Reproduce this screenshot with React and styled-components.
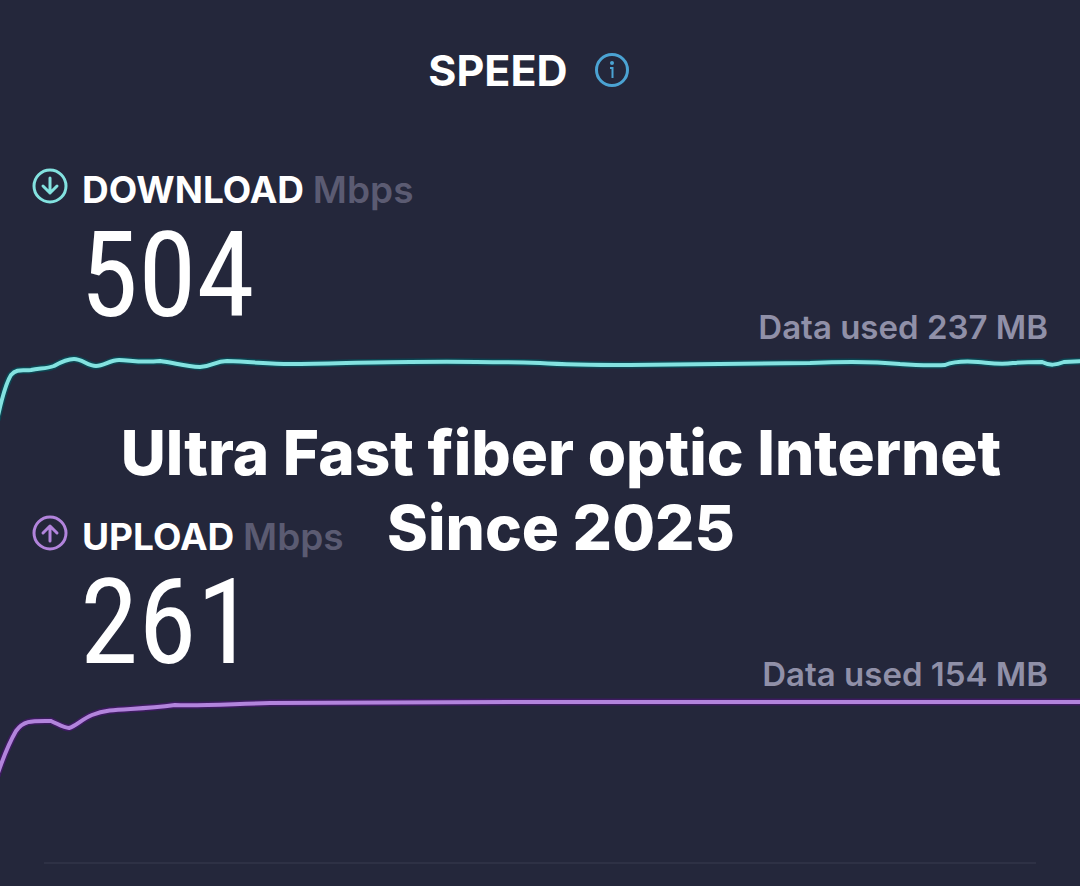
import React from "react";
import styled, { createGlobalStyle } from "styled-components";

const GlobalStyle = createGlobalStyle`
  *, *::before, *::after { box-sizing: border-box; }
  body {
    margin: 0;
    background: #24273b;
    color: #fff;
    font-family: Inter, "Open Sans", sans-serif;
  }
`;

const Page = styled.main`
  position: relative;
  min-height: 100vh;
  overflow: hidden;
  padding-top: 44px;
`;

const Header = styled.header`
  display: flex;
  align-items: center;
  justify-content: center;
  gap: 26px;
  height: 52px;
  padding-right: 22px;
  margin-bottom: 68px;
`;

const Title = styled.h1`
  margin: 0;
  font-size: 43px;
  line-height: 52px;
  font-weight: 700;
`;

const InfoButton = styled.button`
  display: flex;
  padding: 0;
  border: 0;
  background: none;
  color: #4ba3d3;
  cursor: pointer;
`;

const Result = styled.section`
  height: 347px;
`;

const ResultHead = styled.div`
  display: flex;
  align-items: flex-start;
  gap: 14px;
  height: 52px;
  padding: 4px 0 0 32px;
`;

const Direction = styled.svg`
  flex: none;
  color: ${(p) => p.$color};
`;

const Label = styled.h2`
  margin: 0;
  font-size: 37px;
  line-height: 44px;
  font-weight: 700;
`;

const Unit = styled.span`
  font-weight: 600;
  color: #5b5b72;
`;

const Value = styled.p`
  margin: 0;
  padding-left: 80px;
  height: 120px;
  font-family: "Roboto Condensed", "Liberation Sans Narrow", sans-serif;
  font-size: 118px;
  line-height: 120px;
  font-weight: 400;
`;

const DataUsed = styled.p`
  margin: -24px 32px 0;
  font-size: 33px;
  line-height: 30px;
  font-weight: 600;
  text-align: right;
  color: #9090a8;
`;

const Chart = styled.svg`
  display: block;
  width: 100%;
  height: 100px;
`;

const Line = styled.path`
  fill: none;
  vector-effect: non-scaling-stroke;
  stroke: ${(p) => p.$color};
  stroke-width: ${(p) => p.$width};
`;

const Headline = styled.p`
  position: absolute;
  top: 415px;
  left: 0;
  right: 0;
  margin: 0;
  padding-left: 42px;
  font-family: Inter, sans-serif;
  font-size: 62px;
  line-height: 75px;
  font-weight: 800;
  text-align: center;
`;

const Divider = styled.hr`
  height: 2px;
  margin: 4px 44px 0;
  border: 0;
  background: #2e3145;
`;

const results = [
  {
    label: "DOWNLOAD",
    value: 504,
    used: "Data used 237 MB",
    color: "#83e2e0",
    glow: "#0d4552",
    arrow: "M18 10v15M11 18l7 7 7-7",
    path: "M-3 78C0 66 4 44 11 33C17 26 23 29 31 28C39 26 46 27 54 24C61 20 67 17 74 17C82 17 88 24 96 24C104 24 110 18 119 18C130 18 138 21 160 19C175 21 185 24 200 25C213 24 215 19 227 19C255 20 270 22 290 22C330 22 365 20 410 20C460 19 500 20 540 21C570 23 600 23 630 23C700 22 760 22 810 21C850 19 880 20 900 22C920 23 935 24 945 23C955 19 965 19 978 20C990 21 1000 23 1013 21C1025 20 1035 20 1042 20C1050 24 1056 23 1064 20L1084 19",
  },
  {
    label: "UPLOAD",
    value: 261,
    used: "Data used 154 MB",
    color: "#b284dc",
    glow: "#3d1b60",
    arrow: "M18 11v15M11 18l7-7 7 7",
    path: "M-3 87C2 72 9 54 16 42C24 31 32 32 51 32C58 35 64 39 69 39C76 37 82 30 92 26C112 18 130 22 175 16C200 17 230 15 270 14C340 14 420 13 520 13H1084",
  },
];

function SpeedResult({ label, value, used, color, glow, arrow, path }) {
  return (
    <Result>
      <ResultHead>
        <Direction $color={color} width="36" height="36" viewBox="0 0 36 36" fill="none" stroke="currentColor" strokeWidth="3" strokeLinecap="round" strokeLinejoin="round" aria-hidden="true">
          <circle cx="18" cy="18" r="16" />
          <path d={arrow} />
        </Direction>
        <Label>{label} <Unit>Mbps</Unit></Label>
      </ResultHead>
      <Value>{value}</Value>
      <DataUsed>{used}</DataUsed>
      <Chart viewBox="0 0 1080 100" preserveAspectRatio="none" aria-hidden="true">
        <Line d={path} $color={glow} $width={7} />
        <Line d={path} $color={color} $width={4} />
      </Chart>
    </Result>
  );
}

export default function App() {
  return (
    <>
      <GlobalStyle />
      <Page>
        <Header>
          <Title>SPEED</Title>
          <InfoButton type="button" aria-label="About speed">
            <svg width="36" height="36" viewBox="0 0 36 36" fill="none" stroke="currentColor" strokeWidth="3">
              <circle cx="18" cy="18" r="15.500" />
              <path d="M16 16h2.500v10" strokeWidth="2" />
              <circle cx="18" cy="11" r="2" fill="currentColor" stroke="none" />
            </svg>
          </InfoButton>
        </Header>
        {results.map((r) => <SpeedResult key={r.label} {...r} />)}
        <Divider />
        <Headline>Ultra Fast fiber optic Internet<br />Since 2025</Headline>
      </Page>
    </>
  );
}
